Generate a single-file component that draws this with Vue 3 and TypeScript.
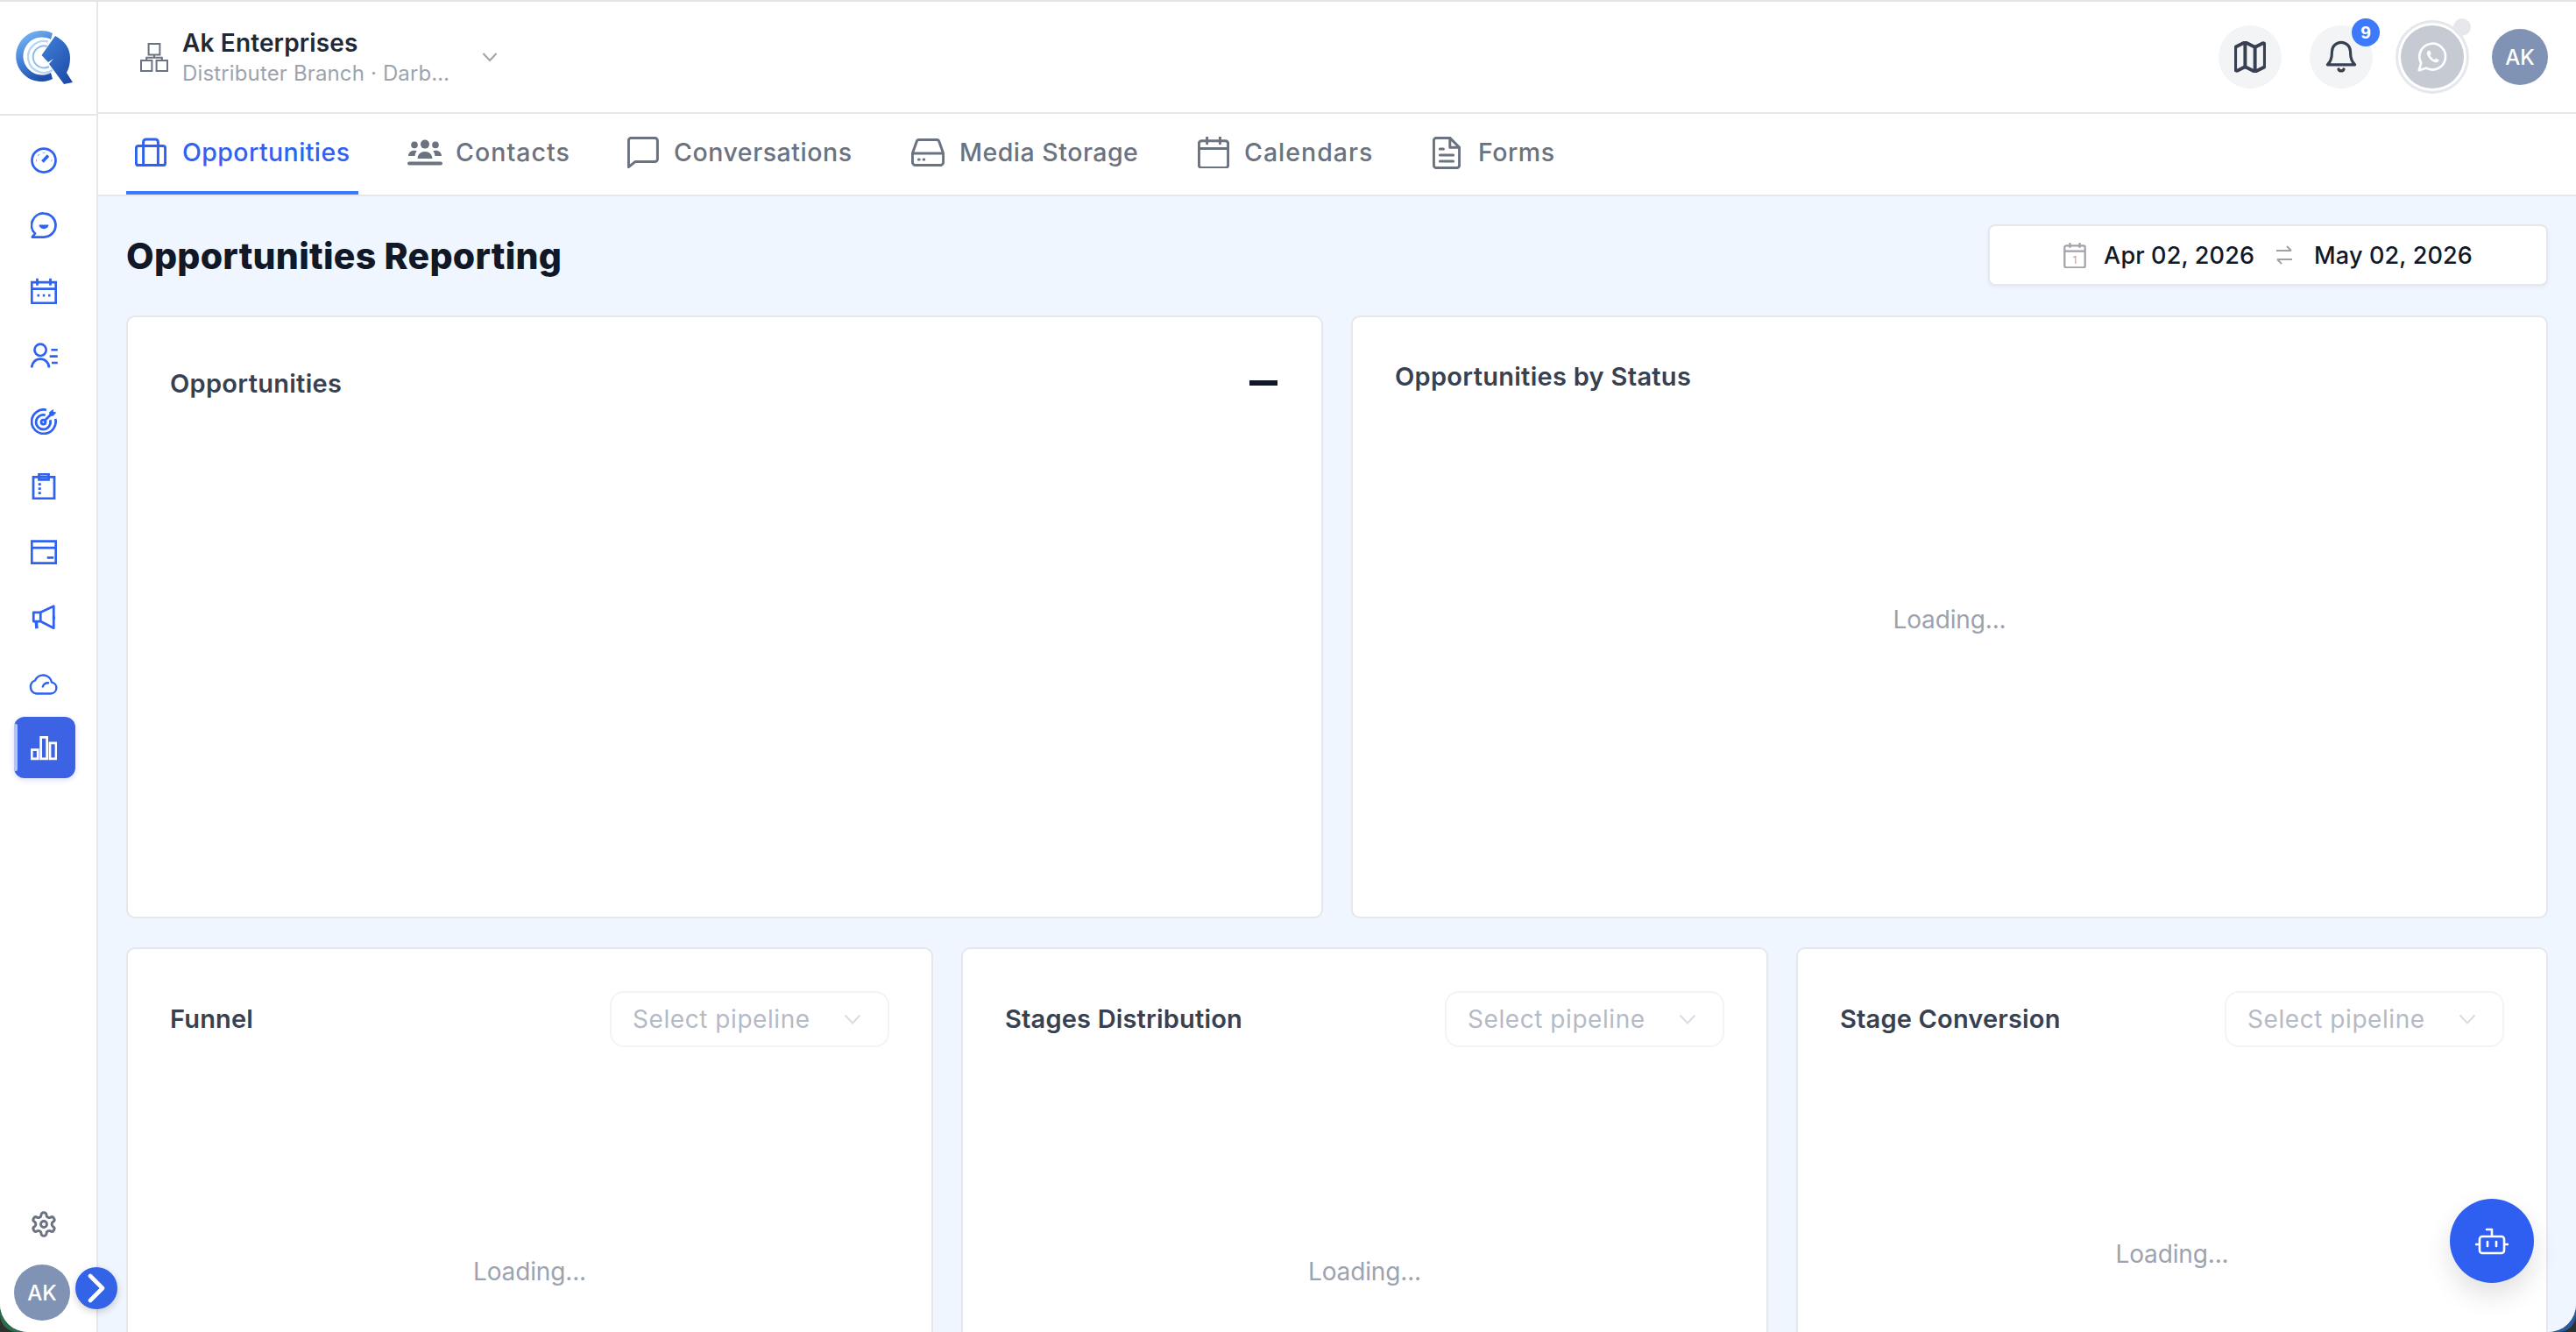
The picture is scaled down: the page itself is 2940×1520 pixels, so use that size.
<script setup lang="ts">
interface Tab { label: string; width: number; box: number; spacing: number; icon: string }
const tabs: Tab[] = [
  { label: 'Opportunities', width: 265, box: 54, spacing: 0.42, icon: 'brief' },
  { label: 'Contacts', width: 205, box: 55, spacing: 1.05, icon: 'people' },
  { label: 'Conversations', width: 278, box: 53, spacing: 0.55, icon: 'bubble' },
  { label: 'Media Storage', width: 281, box: 55, spacing: 0.5, icon: 'drive' },
  { label: 'Calendars', width: 222, box: 53, spacing: 1.0, icon: 'cal' },
  { label: 'Forms', width: 160, box: 52, spacing: 0.5, icon: 'doc' },
]
const lowerCards = [
  { title: 'Funnel', short: false },
  { title: 'Stages Distribution', short: false },
  { title: 'Stage Conversion', short: true },
]
</script>

<template>
  <div class="shell">
    <div class="app">
      <aside class="side">
        <div class="logo">
          <svg width="84" height="78" viewBox="0 0 84 78">
            <defs>
              <linearGradient id="lg1" x1="0.2" y1="0" x2="0.6" y2="1">
                <stop offset="0" stop-color="#7db8f2" />
                <stop offset="0.55" stop-color="#3f7dd6" />
                <stop offset="1" stop-color="#1f4eab" />
              </linearGradient>
              <linearGradient id="lg2" x1="0.1" y1="0" x2="0.9" y2="1">
                <stop offset="0" stop-color="#3f7fd8" />
                <stop offset="1" stop-color="#1d49a5" />
              </linearGradient>
            </defs>
            <path d="M52 12 A29 29 0 1 0 52 64 L50 57 A21.5 21.5 0 1 1 50 19 Z" fill="url(#lg1)" />
            <path d="M47 21.7 A18 18 0 1 0 52 54" fill="none" stroke="#b9d6f5" stroke-width="2.4" />
            <path d="M46 27 A12.5 12.5 0 1 0 48 50" fill="none" stroke="#8fbcec" stroke-width="2" />
            <path d="M55 15 Q72 24 72 40 Q72 50 68 57 L75 68 L65 70 L48 47 L53 41 L47 45 L39.5 37 Z" fill="url(#lg2)" stroke="#fff" stroke-width="1.2" paint-order="stroke" />
          </svg>
        </div>
        <nav class="nav">
          <a class="nav-item">
            <svg class="ni" viewBox="0 0 24 24"><circle cx="12" cy="12" r="10.8" /><path d="M10.8 13.2 16 7.6" stroke-width="2.8" /><path d="M12 4.8v.4M7 7l.3.3M4.8 12h.4M19 12h.4" /></svg>
          </a>
          <a class="nav-item">
            <svg class="ni" viewBox="0 0 24 24"><path d="M12 1.2a10.8 10.8 0 1 1 0 21.6H1.4l2.6-3.2A10.8 10.8 0 0 1 12 1.2z" /><path class="bf" d="M7.6 11.6h8.8a4.4 3.8 0 0 1-8.8 0z" /></svg>
          </a>
          <a class="nav-item">
            <svg class="ni sq" viewBox="0 0 24 24"><path d="M1 4h22v19H1zM1 10h22M6 0.6V7M18 0.6V7" /><path d="M6 16h2M11 16h2M16 16h2" /></svg>
          </a>
          <a class="nav-item">
            <svg class="ni wide" viewBox="0 0 26 24"><circle cx="9" cy="6.6" r="5.4" /><path d="M1 23a8 8 0 0 1 16 0" /><path d="M19 6.5h6M17.6 12.5h7.4M19.5 18.5h5.5" /></svg>
          </a>
          <a class="nav-item">
            <svg class="ni" viewBox="0 0 24 24"><path d="M14.4 1.4A11 11 0 1 0 22.6 9.6" /><path d="M13.4 6.2A6.6 6.6 0 1 0 17.8 10.6" /><circle cx="11.6" cy="12.4" r="2" /><path d="M12 12 19 5" /><path class="bf" d="M17 3.4 20.6 0.8 20.8 3.2 23.6 3.6 20.4 7 17 7z" /></svg>
          </a>
          <a class="nav-item">
            <svg class="ni sq" viewBox="0 0 24 24"><path d="M2.4 3.4h19.2V23H2.4z" /><path d="M7.6 0.8h8.8v5H7.6z" /><path d="M7 10h2.4M7 14h2.4M7 18h2.4" /></svg>
          </a>
          <a class="nav-item">
            <svg class="ni sq" viewBox="0 0 24 24"><path d="M1 2h22v20H1zM1 8h22M15 17h6" /></svg>
          </a>
          <a class="nav-item">
            <svg class="ni" viewBox="0 0 24 24"><path d="M2.6 7.8h6.4v8.2H2.6zM9 7.8 21 2.2v20L9 16z" /><path d="M5 16l.6 6.6" stroke-width="2.8" /><path d="M21 11v2h1.4" /></svg>
          </a>
          <a class="nav-item">
            <svg class="ni cloud" viewBox="0 0 33 28"><path d="M8.5 26.5H25A6.5 6.500 0 0 0 26 13.6 10 10 0 0 0 7 11.5 7.8 7.800 0 0 0 8.5 26.5zM15.500 19.500A6 6 0 0 1 23 14.500" /></svg>
          </a>
          <a class="nav-item active">
            <span class="strip"></span>
            <svg class="ni sq white" viewBox="0 0 24 24"><path d="M1 14h5.6v8.2H1zM9.3 2.6h5.6v19.6H9.3zM17.6 7.8h5.6v14.4h-5.6z" /></svg>
          </a>
        </nav>
        <div class="side-foot">
          <svg class="gear" viewBox="0 0 24 24"><path d="M12.22 2h-.44a2 2 0 0 0-2 2v.18a2 2 0 0 1-1 1.73l-.43.25a2 2 0 0 1-2 0l-.15-.08a2 2 0 0 0-2.73.73l-.22.38a2 2 0 0 0 .73 2.73l.15.1a2 2 0 0 1 1 1.72v.51a2 2 0 0 1-1 1.74l-.15.09a2 2 0 0 0-.73 2.73l.22.38a2 2 0 0 0 2.73.73l.15-.08a2 2 0 0 1 2 0l.43.25a2 2 0 0 1 1 1.73V20a2 2 0 0 0 2 2h.44a2 2 0 0 0 2-2v-.18a2 2 0 0 1 1-1.73l.43-.25a2 2 0 0 1 2 0l.15.08a2 2 0 0 0 2.73-.73l.22-.39a2 2 0 0 0-.73-2.73l-.15-.08a2 2 0 0 1-1-1.74v-.5a2 2 0 0 1 1-1.74l.15-.09a2 2 0 0 0 .73-2.73l-.22-.38a2 2 0 0 0-2.73-.73l-.15.08a2 2 0 0 1-2 0l-.43-.25a2 2 0 0 1-1-1.73V4a2 2 0 0 0-2-2z" /><circle cx="12" cy="12" r="2.6" /></svg>
          <div class="avatar">AK</div>
          <button class="expand">
            <svg width="24" height="34" viewBox="0 0 24 34"><path d="M5 3l14 14-14 14" fill="none" stroke="#fff" stroke-width="4.6" stroke-linecap="round" stroke-linejoin="round" /></svg>
          </button>
        </div>
      </aside>

      <main class="main">
        <header class="top">
          <svg class="org" width="32" height="33" viewBox="0 0 32 33"><path d="M9.6 1h12.8v12.4H9.6zM1 20h12.4v12H1zM18.6 20H31v12H18.6zM16 13.4v3.4M7.2 20v-3.2h17.6V20" /></svg>
          <div class="org-text">
            <div class="org-name">Ak Enterprises</div>
            <div class="org-sub">Distributer Branch · Darb…</div>
          </div>
          <svg class="chev" width="18" height="12" viewBox="0 0 18 12"><path d="M1.5 2 9 10l7.5-8" /></svg>
          <div class="top-right">
            <button class="round">
              <svg class="ti" width="36" height="36" viewBox="2.4 2.6 19.2 18.8"><path d="M14.106 5.553a2 2 0 0 0 1.788 0l3.659-1.83A1 1 0 0 1 21 4.619v12.764a1 1 0 0 1-.553.894l-4.553 2.277a2 2 0 0 1-1.788 0l-4.212-2.106a2 2 0 0 0-1.788 0l-3.659 1.83A1 1 0 0 1 3 19.381V6.618a1 1 0 0 1 .553-.894l4.553-2.277a2 2 0 0 1 1.788 0zM15 5.764v15M9 3.236v15" /></svg>
            </button>
            <button class="round bell">
              <svg class="ti" width="36" height="38" viewBox="0 0 24 25"><path d="M12 1.4a7 7 0 0 0-7 7c0 6-1.6 8-3.4 10h20.8c-1.8-2-3.4-4-3.4-10a7 7 0 0 0-7-7z" /><path d="M10 21.8a2.2 2.2 0 0 0 4 0" stroke-width="2.2" /></svg>
              <span class="badge">9</span>
            </button>
            <div class="wa">
              <svg width="38" height="38" viewBox="0 0 24 24"><path d="M2.4 21.6l1.5-5.3A9.4 9.4 0 1 1 7.6 20z" fill="none" stroke="#fff" stroke-width="1.7" stroke-linejoin="round" /><path d="M9.2 7.4c-.9.4-1.3 1.5-1 2.6.6 2.4 3.2 5.2 5.8 5.9 1.2.3 2.3-.2 2.7-1.1l.1-.8-2.2-1.1-1 1.1c-1.2-.4-2.7-1.9-3.2-3.2l.9-1-1-2.4z" fill="#fff" /></svg>
              <span class="wa-dot"></span>
            </div>
            <div class="avatar">AK</div>
          </div>
        </header>

        <nav class="tabs">
          <a v-for="(t, i) in tabs" :key="t.label" class="tab" :class="{ on: i === 0 }" :style="{ width: t.width + 'px' }">
            <span class="tab-box" :style="{ width: t.box + 'px' }">
              <svg v-if="t.icon === 'brief'" class="tab-i" width="36" height="34" viewBox="0 0 36 34"><path d="M4 9.4h28a2.6 2.6 0 0 1 2.6 2.6v17a2.6 2.6 0 0 1-2.6 2.6H4A2.6 2.6 0 0 1 1.4 29V12A2.6 2.6 0 0 1 4 9.4zM9.6 9.4v22.2M26.4 9.4v22.2M9.6 9.4V5a3 3 0 0 1 3-3h10.8a3 3 0 0 1 3 3v4.4" /></svg>
              <svg v-else-if="t.icon === 'people'" class="tab-fill" width="40" height="30" viewBox="0 0 40 30"><circle cx="20" cy="5.6" r="5" /><circle cx="8" cy="6.4" r="3.8" /><circle cx="32" cy="6.4" r="3.8" /><path d="M11.6 22c0-5 3.6-8 8.4-8s8.4 3 8.4 8zM1 19c0-3.6 2.8-6.2 7-6.2 1 0 2 .2 2.8.5-1.4 1.6-2 3.4-2.2 5.7zM39 19c0-3.6-2.8-6.2-7-6.2-1 0-2 .2-2.8.5 1.4 1.6 2 3.4 2.2 5.7z" /><rect x="0" y="25.6" width="40" height="4" rx="2" /></svg>
              <svg v-else-if="t.icon === 'bubble'" class="tab-i" width="36" height="36" viewBox="0 0 36 36"><path d="M4.4 1.4h27a3 3 0 0 1 3 3v21.2a3 3 0 0 1-3 3H8.8l-7.4 6V4.4a3 3 0 0 1 3-3z" /></svg>
              <svg v-else-if="t.icon === 'drive'" class="tab-i" width="38" height="32" viewBox="0 0 38 32"><path d="M9 1.4h20a3 3 0 0 1 2.9 2.3L36.6 17v10a3.6 3.6 0 0 1-3.6 3.6H5A3.6 3.6 0 0 1 1.4 27V17L6.1 3.7A3 3 0 0 1 9 1.4zM1.4 17h35.2" /><path d="M8.4 24h.8M14 24h.8" /></svg>
              <svg v-else-if="t.icon === 'cal'" class="tab-i" width="36" height="36" viewBox="0 0 36 36"><path d="M4.4 4.8h27.2a3 3 0 0 1 3 3v24.8a3 3 0 0 1-3 3H4.4a3 3 0 0 1-3-3V7.8a3 3 0 0 1 3-3zM1.4 13.6h33.2M10.6 .8v7M25.4 .8v7" /></svg>
              <svg v-else class="tab-i" width="32" height="37" viewBox="0 0 32 37"><path d="M4.4 1.4h15.4L30.6 12.2v20.4a3 3 0 0 1-3 3H4.4a3 3 0 0 1-3-3V4.4a3 3 0 0 1 3-3zM19.8 1.4v10.8h10.8" /><path d="M8.4 14h4M8.4 21h15.2M8.4 28h15.2" /></svg>
            </span>
            <span class="tab-label" :style="{ letterSpacing: t.spacing + 'px' }">{{ t.label }}</span>
          </a>
        </nav>

        <section class="page">
          <div class="title-row">
            <h1 class="page-title">Opportunities Reporting</h1>
            <div class="range">
              <svg class="range-cal" width="26" height="30" viewBox="0 0 28 32"><path d="M3.4 4.6h21.2a2 2 0 0 1 2 2v22.8a2 2 0 0 1-2 2H3.4a2 2 0 0 1-2-2V6.6a2 2 0 0 1 2-2zM1.4 11.4h25.2M8 1v6M20 1v6" /><text x="14" y="26.5" text-anchor="middle" font-size="12" class="range-num">1</text></svg>
              <span class="range-date">Apr 02, 2026</span>
              <svg class="range-swap" width="20" height="22" viewBox="0 0 20 22"><path d="M1 6h17M13 1l5 5M19 16H2M7 21l-5-5" /></svg>
              <span class="range-date">May 02, 2026</span>
            </div>
          </div>

          <div class="row two">
            <article class="card">
              <div class="card-head tall">
                <h2 class="card-title">Opportunities</h2>
                <span class="minus"></span>
              </div>
            </article>
            <article class="card">
              <h2 class="card-title">Opportunities by Status</h2>
              <p class="loading status">Loading...</p>
            </article>
          </div>

          <div class="row three">
            <article v-for="c in lowerCards" :key="c.title" class="card">
              <div class="card-head">
                <h2 class="card-title lower">{{ c.title }}</h2>
                <div class="select">
                  <span class="select-text">Select pipeline</span>
                  <svg class="select-chev" width="20" height="12" viewBox="0 0 20 12"><path d="M1.5 1.5 10 10.5l8.5-9" /></svg>
                </div>
              </div>
              <p class="loading" :class="c.short ? 'short' : 'long'">Loading...</p>
            </article>
          </div>
        </section>

        <button class="fab">
          <svg width="38" height="32" viewBox="0 0 38 32"><path d="M8 11h22a3 3 0 0 1 3 3v13a3 3 0 0 1-3 3H8a3 3 0 0 1-3-3V14a3 3 0 0 1 3-3zM19 11V3h-6M14 17v5M24 17v5M1 20h4M33 20h4" fill="none" stroke="#fff" stroke-width="2.6" stroke-linecap="round" stroke-linejoin="round" /></svg>
        </button>
      </main>
    </div>
  </div>
</template>

<style>
html, body { margin: 0; background: #2b3030; }
</style>

<style scoped>
* { box-sizing: border-box; }
.shell {
  width: 2940px; height: 1520px; overflow: hidden;
  border-radius: 0 0 20px 20px;
  background: linear-gradient(90deg, #2f6b4a 0 50%, #2a5c9c 50%);
  font-family: Inter, "Open Sans", sans-serif;
}
.app {
  position: relative; display: flex; width: 100%; height: 100%;
  background: #fff; overflow: hidden;
  border-top: 2px solid #e4e4e6;
  border-radius: 0 0 32px 32px;
}
.side {
  position: relative; z-index: 2; flex: 0 0 112px; display: flex; flex-direction: column;
  background: #fff; border-right: 2px solid #e5e7eb;
}
.logo {
  height: 130px; display: flex; align-items: flex-start; padding: 24px 0 0 8px;
  border-bottom: 2px solid #e5e7eb;
}
.nav { display: flex; flex-direction: column; gap: 4.44px; padding: 16px 0 0 16px; }
.nav-item {
  position: relative; width: 70px; height: 70px; display: flex; align-items: center;
  padding-left: 19px; border-radius: 12px;
}
.nav-item.active { background: #3b63e4; box-shadow: 0 2px 6px rgba(59, 99, 228, .2); }
.strip {
  position: absolute; left: 0; top: 8px; bottom: 8px; width: 4px;
  background: #b4c5f2; border-radius: 0 2px 2px 0;
}
.ni {
  width: 30px; height: 30px; flex: none; fill: none; stroke: #2f62f0;
  stroke-width: 2.2; stroke-linejoin: round;
}
.ni.sq { stroke-linejoin: miter; }
.ni.wide { width: 32px; }
.ni.cloud { width: 33px; height: 28px; margin-left: -2px; stroke-width: 2.4; }
.ni.white { stroke: #fff; }
.ni .bf { fill: #2f62f0; stroke: none; }
.side-foot { margin-top: auto; position: relative; padding: 0 0 13px 16px; }
.gear {
  display: block; width: 32px; height: 32px; margin: 0 0 30px 18px;
  fill: none; stroke: #6b7280; stroke-width: 2.2;
}
.avatar {
  width: 64px; height: 64px; border-radius: 50%; background: #8193b5; color: #fff;
  display: flex; align-items: center; justify-content: center;
  font-size: 24px; font-weight: 500; flex: none;
}
.expand {
  position: absolute; left: 86px; bottom: 26px; width: 48px; height: 48px; padding: 0;
  border: 0; border-radius: 50%; background: #3363e6; display: flex; align-items: center;
  justify-content: center; box-shadow: 0 3px 8px rgba(0, 0, 0, .18);
}

.main { position: relative; flex: 1; min-width: 0; display: flex; flex-direction: column; background: #eff6ff; }
.top {
  flex: 0 0 128px; display: flex; align-items: center; padding: 0 32px 0 48px;
  background: #fff; border-bottom: 2px solid #e5e7eb;
}
.org { flex: none; fill: none; stroke: #6b7280; stroke-width: 2; margin-right: 16px; }
.org-text { width: 342px; }
.org-name { font-size: 28px; line-height: 36px; font-weight: 600; color: #1f2937; letter-spacing: .005em; }
.org-sub { font-size: 24px; line-height: 30px; color: #9ca3af; letter-spacing: .006em; white-space: nowrap; margin-top: 2px; }
.chev { fill: none; stroke: #9ca3af; stroke-width: 2; }
.top-right { margin-left: auto; display: flex; align-items: center; }
.round {
  position: relative; width: 72px; height: 72px; margin-right: 32px; padding: 0; border: 0;
  border-radius: 50%; background: #f3f4f6; display: flex; align-items: center; justify-content: center;
}
.ti { fill: none; stroke: #374151; stroke-width: 2.1; stroke-linejoin: round; stroke-linecap: round; }
.badge {
  position: absolute; top: -8px; right: -8px; width: 32px; height: 32px; border-radius: 50%;
  background: #3b7bfb; color: #fff; font-size: 21px; font-weight: 800; display: flex;
  align-items: center; justify-content: center;
}
.wa {
  position: relative; width: 72px; height: 72px; border-radius: 50%; background: #c6cad2;
  display: flex; align-items: center; justify-content: center; margin-right: 32px;
  box-shadow: 0 0 0 3px #fff, 0 0 0 6px #e5e7eb;
}
.wa-dot {
  position: absolute; top: -8px; right: -8px; width: 20px; height: 20px; border-radius: 50%;
  background: #e5e7eb;
}
.tabs {
  flex: 0 0 94px; display: flex; gap: 46px; padding-left: 32px;
  background: #fff; border-bottom: 2px solid #e5e7eb;
}
.tab {
  flex: none; height: 92px; display: flex; align-items: center; padding: 0 0 0 10px;
  border-bottom: 4px solid transparent; color: #6b7280;
}
.tab.on { color: #2f62f0; border-bottom-color: #3b7bfb; }
.tab-box { flex: none; display: flex; align-items: center; }
.tab-i { flex: none; fill: none; stroke: currentColor; stroke-width: 3; stroke-linejoin: round; stroke-linecap: round; }
.tab-fill { flex: none; fill: currentColor; }
.tab-label { margin-top: -2px; font-size: 28.5px; font-weight: 500; white-space: nowrap; }

.page { flex: 1; min-height: 0; overflow: hidden; padding: 32px 32px 0; }
.title-row { display: flex; justify-content: space-between; align-items: center; height: 70px; margin-bottom: 34px; }
.page-title { margin: 0; padding-top: 2px; font-size: 41px; line-height: 56px; font-weight: 800; color: #111827; letter-spacing: .006em; }
.range {
  width: 639px; height: 70px; display: flex; align-items: center; justify-content: center;
  background: #fff; border: 2px solid #e5e7eb; border-radius: 8px; box-shadow: 0 2px 4px rgba(0, 0, 0, .05);
}
.range-cal { fill: none; stroke: #a1a1aa; stroke-width: 2.4; margin-right: 20px; }
.range-num { fill: #a1a1aa; stroke: none; font-family: Inter, sans-serif; }
.range-date { font-size: 27px; font-weight: 500; color: #111827; letter-spacing: .005em; white-space: nowrap; }
.range-swap { fill: none; stroke: #a1a1aa; stroke-width: 2; margin: 0 24px; }

.row { display: grid; gap: 32px; height: 688px; }
.row.two { grid-template-columns: 1fr 1fr; margin-bottom: 33px; }
.row.three { grid-template-columns: 921px 921px 858px; }
.card { background: #fff; border: 2px solid #e5e7eb; border-radius: 10px; padding: 48px; }
.card-head { display: flex; align-items: center; justify-content: space-between; height: 64px; }
.card-head.tall { height: 54px; }
.card-title { margin: 0; padding-top: 2px; font-size: 29px; line-height: 36px; font-weight: 600; color: #374151; letter-spacing: .01em; }
.card-title.lower { padding-top: 0; letter-spacing: .006em; }
.minus { width: 32px; height: 6px; background: #111827; margin-right: 2px; }
.select {
  width: 319px; height: 64px; display: flex; align-items: center; padding: 0 24px; justify-content: space-between;
  border: 2px solid #f3f4f6; border-radius: 16px;
}
.select-text { font-size: 28px; color: #b4bac6; letter-spacing: .02em; }
.select-chev { fill: none; stroke: #d9dce3; stroke-width: 2; margin-right: 6px; }
.loading { margin: 0; text-align: center; font-size: 28px; line-height: 36px; color: #9ca3af; letter-spacing: -.005em; }
.loading.status { margin-top: 241px; }
.loading.long { margin-top: 238px; }
.loading.short { margin-top: 218px; }
.fab {
  position: absolute; right: 48px; bottom: 56px; width: 96px; height: 96px; padding: 0; border: 0;
  border-radius: 50%; background: #2f5ff0; display: flex; align-items: center; justify-content: center;
  box-shadow: 0 14px 30px rgba(0, 0, 0, .12);
}
</style>
